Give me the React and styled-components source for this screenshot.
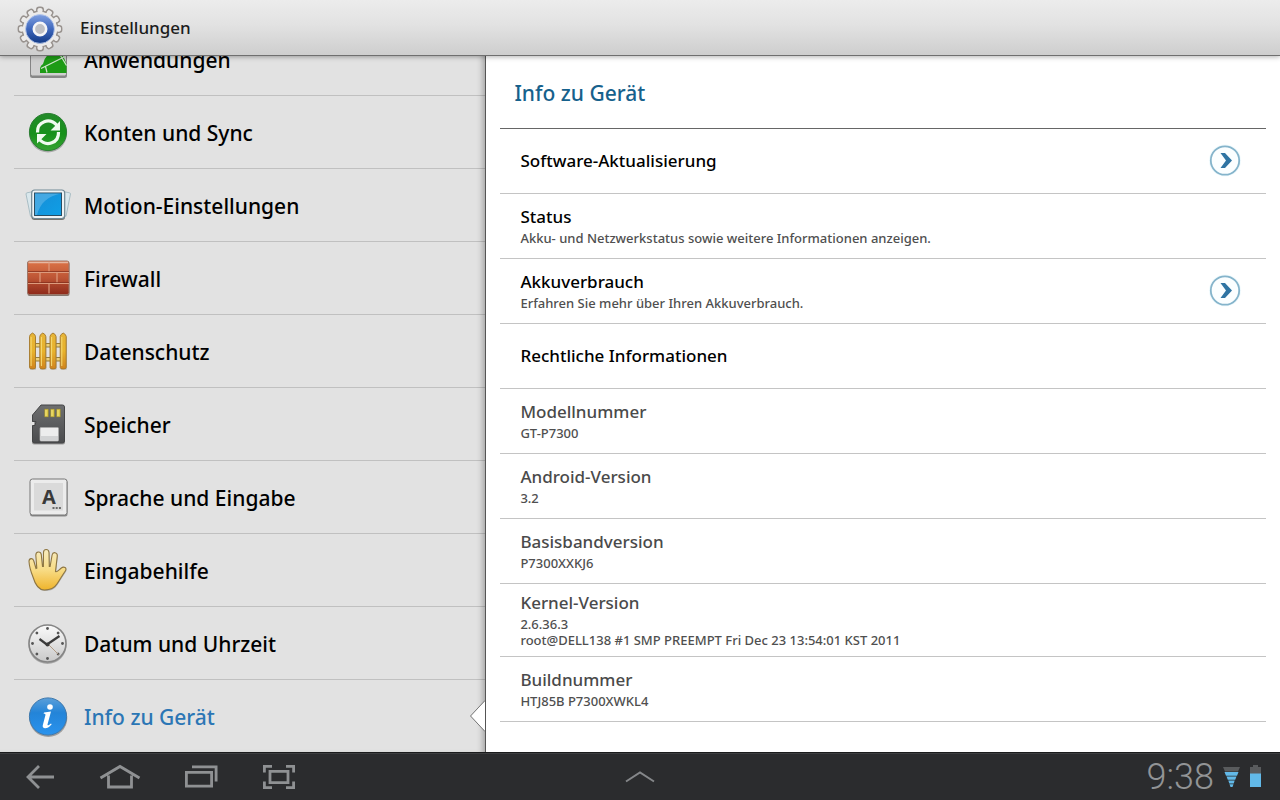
import React, { useState } from "react";
import styled, { createGlobalStyle } from "styled-components";

const GlobalStyle = createGlobalStyle`
  * {
    box-sizing: border-box;
  }

  body {
    margin: 0;
    background: #fff;
    font-family: "Noto Sans", "Open Sans", sans-serif;
    font-weight: 500;
    color: #000;
  }
`;

const Screen = styled.div`
  display: flex;
  flex-direction: column;
  height: 100vh;
  overflow: hidden;
`;

const TopBar = styled.header`
  display: flex;
  flex: none;
  align-items: center;
  gap: 16px;
  height: 56px;
  padding-left: 16px;
  background: linear-gradient(#ececec, #e2e2e2 45%, #cecece);
  border-bottom: 1px solid #6f6f6f;
  box-shadow: 0 1px 5px rgba(0, 0, 0, 0.3);
  z-index: 2;
`;

const AppTitle = styled.h1`
  margin: 0;
  font-size: 17px;
  font-weight: 500;
  color: #1c1c1c;
`;

const Body = styled.div`
  display: grid;
  grid-template-columns: 38% 1fr;
  flex: 1;
  min-height: 0;
`;

const Sidebar = styled.nav`
  display: flex;
  flex-direction: column;
  justify-content: flex-end;
  overflow: hidden;
  background: #e2e2e2;
  border-right: 1px solid #555;
  box-shadow: inset -6px 0 6px -4px rgba(0, 0, 0, 0.3);
`;

const SidebarLink = styled.a`
  position: relative;
  display: flex;
  flex: none;
  align-items: center;
  gap: 12px;
  height: 73px;
  margin-left: 14px;
  padding-left: 10px;
  border-top: 1px solid rgba(0, 0, 0, 0.15);
  font-size: 21px;
  color: ${(props) => (props.$active ? "#2b76b5" : "#000")};
  text-decoration: none;
`;

const SidebarLabel = styled.span`
  padding-top: 2px;
`;

const Notch = styled.svg`
  position: absolute;
  right: -1px;
  top: 18px;
`;

const Details = styled.main`
  min-width: 0;
  padding: 0 14px;
  overflow: hidden;
  background: #fff;
`;

const DetailsTitle = styled.h2`
  display: flex;
  align-items: center;
  height: 73px;
  margin: 0;
  padding: 2px 0 0 14px;
  border-bottom: 1px solid #666;
  font-size: 21px;
  font-weight: 500;
  color: #16618c;
`;

const List = styled.ul`
  margin: 0;
  padding: 0;
  list-style: none;
`;

const Item = styled.li`
  display: flex;
  align-items: center;
  justify-content: space-between;
  min-height: 65px;
  padding: 7px 24px 7px 20px;
  border-bottom: 1px solid #c4c4c4;
`;

const ItemTitle = styled.div`
  font-size: 17px;
  line-height: 24px;
  color: ${(props) => (props.$muted ? "#4a4a4a" : "#000")};
`;

const ItemText = styled.div`
  padding: 1px 0;
  font-size: 13px;
  line-height: 16px;
  color: #4f4f4f;
  white-space: pre-line;
`;

const RoundButton = styled.button`
  display: flex;
  padding: 0;
  border: none;
  background: none;
  cursor: pointer;
`;

const SystemBar = styled.footer`
  display: grid;
  grid-template-columns: 1fr auto 1fr;
  flex: none;
  height: 48px;
  background: #2b2c2e;
  border-top: 1px solid #1a1b1c;
  box-shadow: inset 0 1px 0 #3d3e40;
  z-index: 2;
`;

const ButtonGroup = styled.div`
  display: flex;
`;

const SystemButton = styled.button`
  display: flex;
  align-items: center;
  justify-content: center;
  width: 80px;
  padding: 0;
  border: none;
  background: none;
  cursor: pointer;
`;

const StatusArea = styled.div`
  display: flex;
  align-items: center;
  justify-content: flex-end;
  gap: 8px;
  padding-right: 18px;
`;

const Clock = styled.time`
  font-family: Roboto, sans-serif;
  font-size: 36px;
  font-weight: 300;
  line-height: 48px;
  color: #929496;
`;

const teeth = Array.from({ length: 12 }, (_, i) => i * 30);
const hours = Array.from({ length: 8 }, (_, i) => i * 45);

const GearIcon = () => (
  <svg width="48" height="48" viewBox="0 0 48 48">
    <defs>
      <linearGradient id="gearBlue" x1="0" y1="0" x2="0" y2="1">
        <stop offset="0" stopColor="#7f9fe0" />
        <stop offset="0.5" stopColor="#3f68bd" />
        <stop offset="1" stopColor="#123a86" />
      </linearGradient>
    </defs>
    <g fill="#e9e7e6" stroke="#98928e" strokeWidth="1.6">
      {teeth.map((a) => (
        <rect key={a} x="20.8" y="3.4" width="6.4" height="8" rx="2.4" transform={`rotate(${a} 24 25)`} />
      ))}
      <circle cx="24" cy="25" r="17.6" />
    </g>
    <g fill="#ecebea">
      {teeth.map((a) => (
        <rect key={a} x="21.6" y="4.2" width="4.8" height="8" rx="1.8" transform={`rotate(${a} 24 25)`} />
      ))}
      <circle cx="24" cy="25" r="17" />
    </g>
    <circle cx="24" cy="25" r="14.4" fill="url(#gearBlue)" stroke="#b8c9ec" strokeWidth="0.8" />
    <circle cx="24" cy="25" r="6.2" fill="#bfc0c4" stroke="#f5f6f8" strokeWidth="2.6" />
  </svg>
);

const AppsIcon = () => (
  <svg width="48" height="48" viewBox="0 0 48 48">
    <rect x="6" y="6" width="37" height="37" rx="2.5" fill="#888" />
    <rect x="6.5" y="6" width="36" height="35" rx="2" fill="#d0d0d0" stroke="#858585" />
    <path d="M16 38v-5q1-3 3-4 1-6 5-9h14q2 2 4.500 9v9z" fill="#1d9b15" />
    <path d="M17 33.500L40 22M36.500 20.500l6 10M21.500 31.500l1.500 6" stroke="#d3e6cf" strokeWidth="1.200" />
  </svg>
);

const SyncIcon = () => (
  <svg width="48" height="48" viewBox="0 0 48 48">
    <defs>
      <linearGradient id="syncGreen" x1="0" y1="0" x2="0" y2="1">
        <stop offset="0" stopColor="#238a2a" />
        <stop offset="0.55" stopColor="#17911b" />
        <stop offset="1" stopColor="#36a332" />
      </linearGradient>
    </defs>
    <circle cx="24" cy="25.5" r="19" fill="#000" opacity="0.25" />
    <circle cx="24" cy="24" r="18.6" fill="url(#syncGreen)" stroke="#2c7f34" strokeWidth="1" />
    <g fill="none" stroke="#f0fbef" strokeWidth="3.2">
      <path d="M13.500 24.500c-.5-11 12-15.500 19.500-7" />
      <path d="M34.500 24c.5 11-12 15.500-19.500 7" />
    </g>
    <path d="M36 13v9.500h-9.500zM13 35.500v-9.500h9.500z" fill="#f0fbef" />
  </svg>
);

const MotionIcon = () => (
  <svg width="48" height="48" viewBox="0 0 48 48">
    <defs>
      <linearGradient id="motionBlue" x1="0" y1="0" x2="1" y2="1">
        <stop offset="0" stopColor="#168dd6" />
        <stop offset="1" stopColor="#0f9fe6" />
      </linearGradient>
    </defs>
    <g fill="#d9e7ec" stroke="#a3b9c1" strokeWidth="0.9">
      <path d="M2 13q0-1 1-1.200l5-1v24l-1.500.5z" />
      <path d="M46.500 13q0-1-1-1.200l-5-1v24l1.500.5z" />
    </g>
    <rect x="7.500" y="10.500" width="33.500" height="28.500" rx="3" fill="#77746e" />
    <rect x="7.700" y="9" width="33" height="28.500" rx="3" fill="#eef3f5" stroke="#718995" strokeWidth="1.200" />
    <rect x="10.500" y="12" width="27" height="22.500" fill="url(#motionBlue)" stroke="#294d62" strokeWidth="1" />
    <path d="M11 12.500h26C24 15 16 22 13 34h-2z" fill="#5cb5e8" opacity="0.65" />
  </svg>
);

const FirewallIcon = () => (
  <svg width="48" height="48" viewBox="0 0 48 48">
    <defs>
      <linearGradient id="bricks" x1="0" y1="0" x2="0" y2="1">
        <stop offset="0" stopColor="#dc7447" />
        <stop offset="0.5" stopColor="#bd5535" />
        <stop offset="1" stopColor="#8e2a1b" />
      </linearGradient>
    </defs>
    <rect x="3.500" y="8" width="42" height="34" rx="2" fill="#85766e" />
    <rect x="3.500" y="7" width="41.500" height="33.500" rx="2" fill="url(#bricks)" stroke="#9c7768" />
    <path d="M4.500 8.500h39.500" stroke="#e5b8a2" strokeWidth="1.300" />
    <path d="M4 18.500h41M4 29.500h41M25 8.500v10M16 18.500v11M33 18.500v11M25 29.500v10" stroke="#dd9b7d" strokeWidth="1.200" />
    <path d="M4 17.500h41M4 28.500h41" stroke="#7f2d1b" strokeWidth="0.700" />
  </svg>
);

const FenceIcon = () => (
  <svg width="48" height="48" viewBox="0 0 48 48">
    <defs>
      <linearGradient id="picket" x1="0" y1="0" x2="0" y2="1">
        <stop offset="0" stopColor="#e6b437" />
        <stop offset="0.5" stopColor="#e8b32c" />
        <stop offset="1" stopColor="#d0831c" />
      </linearGradient>
    </defs>
    <rect x="9" y="16.500" width="32" height="3.500" fill="#edd27a" stroke="#8d7330" strokeWidth="0.900" />
    <rect x="9" y="30.500" width="32" height="3.500" fill="#edd27a" stroke="#8d7330" strokeWidth="0.900" />
    {[5.5, 15.8, 26, 36.200].map((x) => (
      <g key={x}>
        <path d={`M${x + 0.5} 10l3-4 3 4v32.500h-6z`} fill="#8c8c86" opacity="0.6" />
        <path
          d={`M${x} 9.500q0-2 3-3.500 3 1.500 3 3.500v31q0 1.500-3 1.500t-3-1.500z`}
          fill="url(#picket)"
          stroke="#a4772a"
          strokeWidth="0.900"
        />
        <path d={`M${x + 1.600} 10v29`} stroke="#f6db74" strokeWidth="1" />
      </g>
    ))}
  </svg>
);

const StorageIcon = () => (
  <svg width="48" height="48" viewBox="0 0 48 48">
    <defs>
      <linearGradient id="card" x1="0" y1="0" x2="0" y2="1">
        <stop offset="0" stopColor="#6e6f70" />
        <stop offset="1" stopColor="#4a4b4d" />
      </linearGradient>
    </defs>
    <path d="M17 5.500h22q2 0 2 2v34q0 2-2 2H10q-2 0-2-2V25l2-1v-3H8v-6z" transform="translate(0 1)" fill="#999" />
    <path
      d="M17 5h21.500q2 0 2 2v34q0 2-2 2H10.500q-2 0-2-2V25.500H11l1-4H8.500V15z"
      fill="url(#card)"
      stroke="#444546"
      strokeWidth="1"
    />
    <path d="M20.500 9h4v8h-4zM26.500 9h4v8h-4zM32.500 9h4v8h-4z" fill="#d9c443" stroke="#837a3c" strokeWidth="0.600" />
    <path d="M22 10v6M28 10v6M34 10v6" stroke="#f3e583" strokeWidth="1" />
    <rect x="16" y="27.500" width="18.500" height="13.500" rx="1" fill="#ededed" stroke="#aaa" strokeWidth="0.800" />
    <path d="M16.500 36h17.500v4.500H16.500z" fill="#d2d3d4" />
  </svg>
);

const LanguageIcon = () => (
  <svg width="48" height="48" viewBox="0 0 48 48">
    <rect x="6" y="7" width="37.500" height="36.500" rx="2.500" fill="#8a8a8a" />
    <rect x="6" y="6" width="37" height="36" rx="2.500" fill="#ececec" stroke="#777" />
    <rect x="10" y="10" width="29" height="27.500" fill="#dadada" />
    <text x="25" y="31" textAnchor="middle" fontFamily="Open Sans" fontWeight="700" fontSize="20" fill="#3a3a3a">
      A
    </text>
    <path d="M28.500 35h8.500" stroke="#444" strokeWidth="1.600" strokeDasharray="2 1.200" />
  </svg>
);

const handPath =
  "M9 31C7 26 5.200 19 5 15.500c0-3.500 4-4 4.800-.5l2.200 7.500.8-.3-1-13c0-4 5-4.200 5.500-.4l1.200 11.700h.9L19.500 6.500c0-4 5.300-4 5.500 0l.3 14h.8l2-11.500c.7-3.600 5.400-2.800 5.200.8l-1.800 15.700c1.500 1 3-1.300 5.500-3.300 3-2.400 6.500-.4 4.300 2.800-2.800 4-5.300 8.500-8 12.500C30.500 42 26.500 44 20.500 44S11 38 9 31z";

const HandIcon = () => (
  <svg width="48" height="48" viewBox="0 0 48 48">
    <defs>
      <linearGradient id="skin" x1="0" y1="0" x2="0" y2="1">
        <stop offset="0" stopColor="#f8ecc0" />
        <stop offset="0.5" stopColor="#f8dc86" />
        <stop offset="1" stopColor="#efb42c" />
      </linearGradient>
    </defs>
    <path d={handPath} transform="translate(.5 1)" fill="#999" opacity="0.7" />
    <path d={handPath} fill="url(#skin)" stroke="#8e7642" strokeWidth="1.100" />
  </svg>
);

const ClockIcon = () => (
  <svg width="48" height="48" viewBox="0 0 48 48">
    <defs>
      <linearGradient id="dial" x1="0" y1="0" x2="0" y2="1">
        <stop offset="0" stopColor="#fafafa" />
        <stop offset="1" stopColor="#c9c9c9" />
      </linearGradient>
    </defs>
    <circle cx="23.500" cy="26" r="19" fill="#000" opacity="0.25" />
    <circle cx="23.500" cy="24.500" r="18.500" fill="url(#dial)" stroke="#858585" strokeWidth="1.600" />
    {hours.map((a) => (
      <circle key={a} cx="23.500" cy="9.500" r="1.400" fill="#555" transform={`rotate(${a} 23.500 24.500)`} />
    ))}
    <path d="M24 25l10.500 10.500" stroke="#b09a83" strokeWidth="1" />
    <path d="M23 25.500L35.500 17M23.500 26L15.500 20" stroke="#3b3b3b" strokeWidth="2.200" />
    <circle cx="23.500" cy="25.500" r="2" fill="#3b3b3b" />
  </svg>
);

const InfoIcon = () => (
  <svg width="48" height="48" viewBox="0 0 48 48">
    <defs>
      <linearGradient id="infoBlue" x1="0" y1="0" x2="0" y2="1">
        <stop offset="0" stopColor="#5b9fd9" />
        <stop offset="0.4" stopColor="#2384d8" />
        <stop offset="1" stopColor="#2a93ee" />
      </linearGradient>
    </defs>
    <circle cx="24.300" cy="26" r="19" fill="#000" opacity="0.3" />
    <circle cx="24" cy="24.500" r="18.600" fill="url(#infoBlue)" stroke="#3f79ad" strokeWidth="1" />
    <circle cx="26" cy="15" r="2.800" fill="#fff" />
    <path
      d="M20 20.500l7-1-3.500 13c-.3 1.200.8 1.300 3.500-1l.7.800c-3 3.500-5 4.200-7 4-2-.200-2.300-1.800-1.800-3.500l2.500-9.500c.300-1.200-.400-1.600-1.800-1.600z"
      fill="#fff"
    />
  </svg>
);

const ChevronIcon = () => (
  <svg width="34" height="34" viewBox="0 0 34 34">
    <circle cx="17" cy="16.500" r="16" fill="#f0fafd" />
    <circle cx="17" cy="16.500" r="14.200" fill="#fbfeff" stroke="#85b4cb" strokeWidth="1.800" />
    <path d="M12.500 9h4.500l7 7.500-7 7.500h-4.500l5.500-7.500z" fill="#2f74a3" />
  </svg>
);

const strokeProps = { fill: "none", stroke: "#8f9193", strokeWidth: 2.8 };

const BackIcon = () => (
  <svg width="40" height="32" viewBox="0 0 40 32" {...strokeProps}>
    <path d="M7.500 16H34M19 5L8 16l11 11" />
  </svg>
);

const HomeIcon = () => (
  <svg width="44" height="32" viewBox="0 0 44 32" {...strokeProps}>
    <path d="M2.500 17L22 5.500 41.500 17M10.500 14.500V26h23V14.500" />
  </svg>
);

const RecentIcon = () => (
  <svg width="40" height="32" viewBox="0 0 40 32" {...strokeProps}>
    <path d="M6.400 11.400h25.200v13.800H6.400zM12 5.900h24.100v14.600" />
  </svg>
);

const ScreenshotIcon = () => (
  <svg width="40" height="32" viewBox="0 0 40 32" {...strokeProps}>
    <path d="M4.400 11.500V5.400H12M26 5.400h7.600v6.100M33.600 20.500v6.100H26M12 26.600H4.400v-6.100M10 10.400h18v11.200H10z" />
  </svg>
);

const UpIcon = () => (
  <svg width="34" height="32" viewBox="0 0 34 32" fill="none" stroke="#85878a" strokeWidth="2">
    <path d="M3 20.500l14-9 14 9" />
  </svg>
);

const WifiIcon = () => (
  <svg width="20" height="24" viewBox="0 0 20 24">
    <path d="M1 2h17l-2 4.500H3z" fill="#595b5d" />
    <path d="M2.500 7h14l-1.500 3.800H4zM4.500 11.600h10l-1.300 3.200H5.800zM6.300 15.600h6.400l-1 2.800H7.300zM7.500 19.200h4L10.500 22h-2z" fill="#62b9e8" />
  </svg>
);

const BatteryIcon = () => (
  <svg width="12" height="24" viewBox="0 0 12 24">
    <path d="M3 0h5v2h3v7H0V2h3z" fill="#595b5d" />
    <path d="M0 8.500h11V22H0z" fill="#62b9e8" />
  </svg>
);

const categories = [
  { id: "apps", label: "Anwendungen", Icon: AppsIcon },
  { id: "sync", label: "Konten und Sync", Icon: SyncIcon },
  { id: "motion", label: "Motion-Einstellungen", Icon: MotionIcon },
  { id: "firewall", label: "Firewall", Icon: FirewallIcon },
  { id: "privacy", label: "Datenschutz", Icon: FenceIcon },
  { id: "storage", label: "Speicher", Icon: StorageIcon },
  { id: "language", label: "Sprache und Eingabe", Icon: LanguageIcon },
  { id: "accessibility", label: "Eingabehilfe", Icon: HandIcon },
  { id: "date", label: "Datum und Uhrzeit", Icon: ClockIcon },
  { id: "about", label: "Info zu Gerät", Icon: InfoIcon },
];

const entries = [
  { title: "Software-Aktualisierung", arrow: true },
  { title: "Status", text: "Akku- und Netzwerkstatus sowie weitere Informationen anzeigen." },
  { title: "Akkuverbrauch", text: "Erfahren Sie mehr über Ihren Akkuverbrauch.", arrow: true },
  { title: "Rechtliche Informationen" },
  { title: "Modellnummer", text: "GT-P7300", muted: true },
  { title: "Android-Version", text: "3.2", muted: true },
  { title: "Basisbandversion", text: "P7300XXKJ6", muted: true },
  {
    title: "Kernel-Version",
    text: "2.6.36.3\nroot@DELL138 #1 SMP PREEMPT Fri Dec 23 13:54:01 KST 2011",
    muted: true,
  },
  { title: "Buildnummer", text: "HTJ85B P7300XWKL4", muted: true },
];

const App = () => {
  const [active, setActive] = useState("about");

  return (
    <Screen>
      <GlobalStyle />
      <TopBar>
        <GearIcon />
        <AppTitle>Einstellungen</AppTitle>
      </TopBar>

      <Body>
        <Sidebar>
          {categories.map(({ id, label, Icon }) => (
            <SidebarLink key={id} href={`#${id}`} $active={id === active} onClick={() => setActive(id)}>
              <Icon />
              <SidebarLabel>{label}</SidebarLabel>
              {id === active && (
                <Notch width="17" height="36" viewBox="0 0 17 36">
                  <path d="M17 2L2 18l15 16z" fill="#fff" />
                  <path d="M16 2.500L1.500 18 16 33.500" fill="none" stroke="#777" />
                </Notch>
              )}
            </SidebarLink>
          ))}
        </Sidebar>

        <Details>
          <DetailsTitle>Info zu Gerät</DetailsTitle>
          <List>
            {entries.map((entry) => (
              <Item key={entry.title}>
                <div>
                  <ItemTitle $muted={entry.muted}>{entry.title}</ItemTitle>
                  {entry.text && <ItemText>{entry.text}</ItemText>}
                </div>
                {entry.arrow && (
                  <RoundButton aria-label={entry.title}>
                    <ChevronIcon />
                  </RoundButton>
                )}
              </Item>
            ))}
          </List>
        </Details>
      </Body>

      <SystemBar>
        <ButtonGroup>
          <SystemButton aria-label="Zurück">
            <BackIcon />
          </SystemButton>
          <SystemButton aria-label="Startseite">
            <HomeIcon />
          </SystemButton>
          <SystemButton aria-label="Letzte Anwendungen">
            <RecentIcon />
          </SystemButton>
          <SystemButton aria-label="Bildschirmfoto">
            <ScreenshotIcon />
          </SystemButton>
        </ButtonGroup>
        <SystemButton aria-label="Mini-Anwendungen">
          <UpIcon />
        </SystemButton>
        <StatusArea>
          <Clock>9:38</Clock>
          <WifiIcon />
          <BatteryIcon />
        </StatusArea>
      </SystemBar>
    </Screen>
  );
};

export default App;
